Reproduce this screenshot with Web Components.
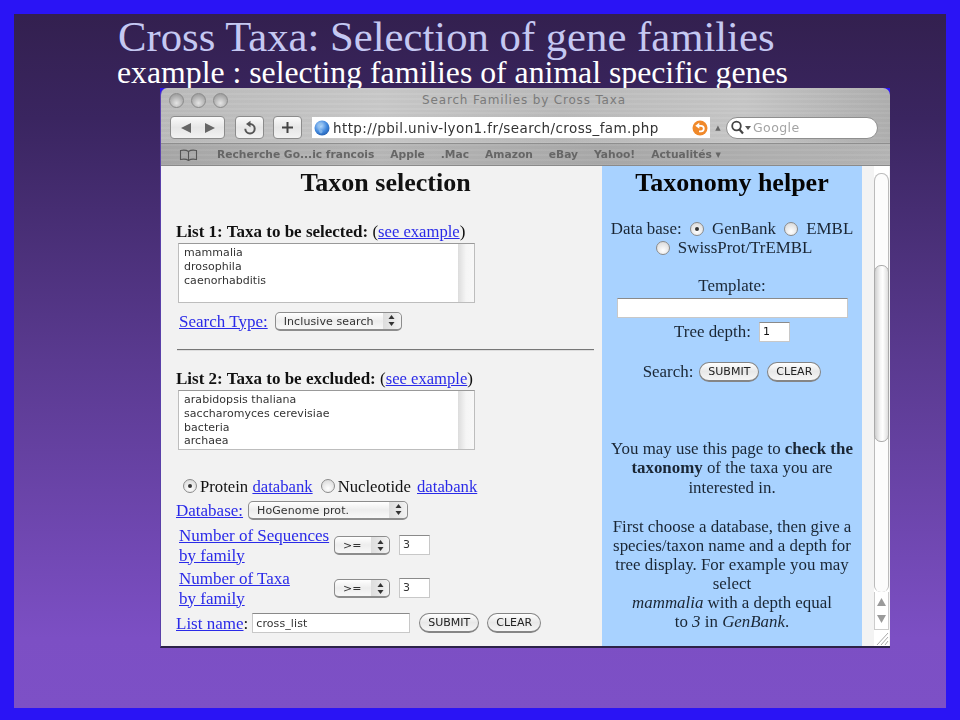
<!DOCTYPE html>
<html>
<head>
<meta charset="utf-8">
<title>Cross Taxa</title>
<style>
  html, body { margin: 0; padding: 0; background: #2a14f5; }
</style>
</head>
<body>
<slide-page>
  <span slot="title">Cross Taxa: Selection of gene families</span>
  <span slot="subtitle">example : selecting families of animal specific genes</span>
  <browser-window page-title="Search Families by Cross Taxa">
    <taxon-form slot="left"></taxon-form>
    <taxonomy-helper slot="right"></taxonomy-helper>
  </browser-window>
</slide-page>

<script>
class SlidePage extends HTMLElement {
  constructor() {
    super();
    this.attachShadow({ mode: 'open' }).innerHTML = `
      <style>
        :host {
          display: block;
          box-sizing: border-box;
          width: 960px;
          height: 720px;
          padding: 14px 14px 12px 14px;
          background: #2a14f5;
          font-family: "Liberation Serif", serif;
        }
        .inner {
          height: 100%;
          box-sizing: border-box;
          padding: 2px 0 0 104px;
          background: linear-gradient(180deg, #33204f 0%, #3a2560 15%, #5a3a90 50%, #7c4fc4 90%, #7d50c6 100%);
        }
        .title { color: #c5c8f2; font-size: 42.7px; line-height: 42px; white-space: nowrap; }
        .subtitle { color: #fff; font-size: 31.75px; line-height: 30px; white-space: nowrap; margin-left: -1px; }
        .stage { margin: 0 0 0 42px; }
      </style>
      <div class="inner">
        <div class="title"><slot name="title"></slot></div>
        <div class="subtitle"><slot name="subtitle"></slot></div>
        <div class="stage"><slot></slot></div>
      </div>`;
  }
}

class BrowserWindow extends HTMLElement {
  constructor() {
    super();
    this.attachShadow({ mode: 'open' }).innerHTML = `
      <style>
        :host {
          display: block;
          width: 730px;
          height: 560px;
          background: linear-gradient(180deg, #2a14f5 0, #2a14f5 10px, transparent 10px);
          font-family: "DejaVu Sans", sans-serif;
        }
        .win {
          height: 100%;
          box-sizing: border-box;
          border-radius: 7px 7px 0 0;
          border-left: 1px solid #5a40a8;
          border-bottom: 2px solid #2b2248;
          overflow: hidden;
          display: flex;
          flex-direction: column;
          filter: blur(.35px);
        }
        .metal {
          background:
            repeating-linear-gradient(180deg, rgba(255,255,255,.025) 0 2px, rgba(0,0,0,.02) 2px 5px),
            linear-gradient(90deg, #bcbcbc, #cacaca 30%, #bcbcbc 55%, #c8c8c8 80%, #b0b0b0);
        }
        .titlebar {
          height: 24px;
          flex: none;
          position: relative;
          display: flex;
          align-items: center;
          justify-content: center;
          color: #7a7a7a;
          font-size: 12px;
          letter-spacing: .83px;
          padding-right: 3px;
        }
        .lights {
          position: absolute;
          left: 8px;
          top: 5px;
          display: flex;
          gap: 7px;
        }
        .lights i {
          width: 15px;
          height: 15px;
          box-sizing: border-box;
          border-radius: 50%;
          border: 1px solid #8a8a8a;
          background: radial-gradient(circle at 50% 70%, #e4e4e4, #a2a2a2 75%);
        }
        .toolbar {
          height: 32px;
          flex: none;
          display: flex;
          align-items: center;
          padding: 0 11px 0 9px;
          box-sizing: border-box;
          border-bottom: 1px solid #8e8e8e;
        }
        .tb {
          height: 23px;
          box-sizing: border-box;
          border: 1px solid #8c8c8c;
          border-radius: 4px;
          background: linear-gradient(180deg, #fafafa, #e6e6e6 50%, #f2f2f2);
          display: flex;
          align-items: center;
          justify-content: center;
        }
        .nav { width: 55px; margin-right: 10px; gap: 12px; }
        .reload { width: 29px; margin-right: 9px; }
        .plus { width: 29px; margin-right: 10px; }
        .url {
          width: 398px;
          height: 21px;
          flex: none;
          box-sizing: border-box;
          background: #fff;
          display: flex;
          align-items: center;
          gap: 3px;
          padding: 0 2px 0 2px;
          font-size: 13.5px;
          color: #333;
          letter-spacing: .4px;
          white-space: nowrap;
        }
        .url span { flex: 1; }
        .caret { width: 16px; text-align: center; font-size: 7px; color: #666; flex: none; }
        .search {
          width: 152px;
          height: 22px;
          box-sizing: border-box;
          background: #fff;
          border: 1px solid #8f8f8f;
          border-radius: 11px;
          display: flex;
          align-items: center;
          padding-left: 3px;
          gap: 1px;
          color: #a4a4a4;
          font-size: 12.5px;
          letter-spacing: .4px;
        }
        .bookmarks {
          height: 22px;
          flex: none;
          box-sizing: border-box;
          display: flex;
          align-items: center;
          padding-left: 18px;
          font-size: 10.7px;
          font-weight: bold;
          color: #666;
          white-space: nowrap;
          border-bottom: 1px solid #8a8a8a;
          background:
            repeating-linear-gradient(180deg, rgba(255,255,255,.03) 0 2px, rgba(0,0,0,.02) 2px 5px),
            linear-gradient(90deg, #a8a8a8, #b8b8b8 30%, #aaaaaa 60%, #b6b6b6);
        }
        .bookmarks svg { margin-right: 19px; }
        .bookmarks span { margin-right: 16px; }
        .content { flex: 1; min-height: 0; display: flex; }
        .left { width: 441px; flex: none; background: #f2f2f2; }
        .right { width: 260px; flex: none; background: #a8d2ff; }
        .gutter { flex: 1; background: #f3f3f3; display: flex; justify-content: flex-end; }
        ::slotted(*) { height: 100%; }
      </style>
      <div class="win">
        <div class="metal titlebar">
          <div class="lights"><i></i><i></i><i></i></div>
          <span id="ttl"></span>
        </div>
        <div class="metal toolbar">
          <div class="tb nav">
            <svg width="12" height="12" viewBox="0 0 12 12"><path d="M11 1 1 6l10 5z" fill="#666"/></svg>
            <svg width="12" height="12" viewBox="0 0 12 12"><path d="M1 1l10 5-10 5z" fill="#666"/></svg>
          </div>
          <div class="tb reload">
            <svg width="14" height="15" viewBox="0 0 14 15"><path d="M7 4a4.700 4.700 0 1 1-4.700 4.700" fill="none" stroke="#555" stroke-width="2"/><path d="M7.500 .8V7.200L3 4z" fill="#555"/></svg>
          </div>
          <div class="tb plus">
            <svg width="13" height="13" viewBox="0 0 13 13"><path d="M6.500 1v11M1 6.500h11" stroke="#444" stroke-width="2" fill="none"/></svg>
          </div>
          <div class="url">
            <svg width="16" height="16" viewBox="0 0 16 16" style="flex:none">
              <defs><radialGradient id="g" cx=".4" cy=".35" r=".8"><stop offset="0" stop-color="#bfe0ff"/><stop offset=".55" stop-color="#3f86dc"/><stop offset="1" stop-color="#1a4f9c"/></radialGradient></defs>
              <circle cx="8" cy="8" r="7.500" fill="url(#g)"/>
              <path d="M5 3.500c2-1 4 0 3 1.500S5.500 6 5.500 8 8 9 8.500 11 7 14 6 13 3.500 6 5 3.500z" fill="#8fbdea" opacity=".7"/>
            </svg>
            <span>http://pbil.univ-lyon1.fr/search/cross_fam.php</span>
            <svg width="16" height="16" viewBox="0 0 16 16" style="flex:none">
              <circle cx="8" cy="8" r="7.500" fill="#f0892a"/>
              <path d="M5.500 5.800H9a2.800 2.800 0 0 1 0 5.600H7" fill="none" stroke="#fff" stroke-width="1.800"/>
              <path d="M7.300 2.800v6L3.300 5.800z" fill="#fff"/>
            </svg>
          </div>
          <div class="caret">&#9650;</div>
          <div class="search">
            <svg width="22" height="15" viewBox="0 0 22 15" style="flex:none"><circle cx="6.500" cy="6" r="4.300" fill="none" stroke="#444" stroke-width="1.800"/><path d="M9.500 9.500 13 13.500" stroke="#444" stroke-width="2.200"/><path d="M15 6h6l-3 4z" fill="#555"/></svg>
            <span>Google</span>
          </div>
        </div>
        <div class="bookmarks">
          <svg width="19" height="12" viewBox="0 0 19 12"><path d="M9.500 2.500C7.500 1 4 1 1.500 1.500v9c2.500-.5 6-.5 8 1 2-1.500 5.500-1.500 8-1v-9C15 1 11.500 1 9.500 2.500zm0 0v9" fill="none" stroke="#555" stroke-width="1.100"/></svg>
          <span>Recherche Go...ic francois</span>
          <span>Apple</span>
          <span>.Mac</span>
          <span>Amazon</span>
          <span>eBay</span>
          <span>Yahoo!</span>
          <span>Actualités &#9662;</span>
        </div>
        <div class="content">
          <div class="left"><slot name="left"></slot></div>
          <div class="right"><slot name="right"></slot></div>
          <div class="gutter"><scroll-track></scroll-track></div>
        </div>
      </div>`;
  }

  connectedCallback() {
    this.shadowRoot.getElementById('ttl').textContent = this.getAttribute('page-title');
  }
}

class ScrollTrack extends HTMLElement {
  constructor() {
    super();
    this.attachShadow({ mode: 'open' }).innerHTML = `
      <style>
        :host {
          display: flex;
          flex-direction: column;
          box-sizing: border-box;
          width: 15px;
          height: 100%;
          margin-right: 1px;
          padding-top: 7px;
          background: #fff;
        }
        .trough {
          flex: 1;
          box-sizing: border-box;
          border: 1px solid #bbb;
          border-bottom: 0;
          border-radius: 7px 7px 7px 7px / 8px 8px 6px 6px;
          background: #fcfcfc;
          padding-top: 91px;
          display: flex;
          flex-direction: column;
        }
        .thumb {
          height: 177px;
          margin: 0 0 0 -1px;
          width: 15px;
          box-sizing: border-box;
          border: 1px solid #aaa;
          border-radius: 7px;
          background: linear-gradient(90deg, #cfcfcf, #f6f6f6 40%, #fff 60%, #dedede);
        }
        .arrows {
          height: 37px;
          flex: none;
          border: 1px solid #ccc;
          border-top: 0;
          display: flex;
          flex-direction: column;
          align-items: center;
          justify-content: center;
          gap: 9px;
        }
        .grip { height: 16px; flex: none; }
      </style>
      <div class="trough"><div class="thumb"></div></div>
      <div class="arrows">
        <svg width="9" height="8" viewBox="0 0 9 8"><path d="M4.500 0 9 8H0z" fill="#9a9a9a"/></svg>
        <svg width="9" height="8" viewBox="0 0 9 8"><path d="M4.500 8 9 0H0z" fill="#9a9a9a"/></svg>
      </div>
      <div class="grip">
        <svg width="15" height="16" viewBox="0 0 15 16"><path d="M14 3 3 15M14 7 7 15M14 11l-3 4" stroke="#aaa" fill="none"/></svg>
      </div>`;
  }
}

class AquaSelect extends HTMLElement {
  constructor() {
    super();
    this.attachShadow({ mode: 'open' }).innerHTML = `
      <style>
        :host {
          display: inline-flex;
          box-sizing: border-box;
          height: 19px;
          border: 1px solid #8d8d8d;
          border-bottom-width: 2px;
          border-radius: 5px;
          background: linear-gradient(180deg, #fff, #ededed 50%, #f8f8f8);
          font: 11px "DejaVu Sans", sans-serif;
          letter-spacing: .1px;
          color: #333;
          align-items: center;
          vertical-align: middle;
          white-space: nowrap;
        }
        .label { flex: 1; padding: 1px 0 0 8px; }
        .arrows {
          width: 18px;
          align-self: stretch;
          display: flex;
          align-items: center;
          justify-content: center;
          background: linear-gradient(90deg, #ddd, #f2f2f2);
          border-radius: 0 5px 5px 0;
        }
      </style>
      <span class="label"><slot></slot></span>
      <span class="arrows"><svg width="7" height="11" viewBox="0 0 7 11"><path d="M3.500 0 6.500 4H.5zM3.500 11 .5 7h6z" fill="#333"/></svg></span>`;
  }
}

class AquaButton extends HTMLElement {
  constructor() {
    super();
    this.attachShadow({ mode: 'open' }).innerHTML = `
      <style>
        :host {
          display: inline-flex;
          box-sizing: border-box;
          height: 20px;
          padding: 0 8px;
          border: 1px solid #858585;
          border-bottom-width: 2px;
          border-radius: 10px;
          background: linear-gradient(180deg, #fff, #e8e8e8 50%, #f6f6f6);
          font: 11px "DejaVu Sans", sans-serif;
          color: #222;
          align-items: center;
          justify-content: center;
          vertical-align: middle;
        }
      </style>
      <slot></slot>`;
  }
}

class AquaRadio extends HTMLElement {
  constructor() {
    super();
    this.attachShadow({ mode: 'open' }).innerHTML = `
      <style>
        :host {
          display: inline-block;
          box-sizing: border-box;
          width: 14px;
          height: 14px;
          border: 1px solid #8a8a8a;
          border-radius: 50%;
          background: radial-gradient(circle at 50% 70%, #fff, #dcdcdc 80%);
          vertical-align: -2px;
          position: relative;
        }
        :host([checked])::after {
          content: "";
          position: absolute;
          left: 4px;
          top: 4px;
          width: 4px;
          height: 4px;
          border-radius: 50%;
          background: #333;
        }
      </style>`;
  }
}

class TextList extends HTMLElement {
  constructor() {
    super();
    this.attachShadow({ mode: 'open' }).innerHTML = `
      <style>
        :host {
          display: flex;
          box-sizing: border-box;
          height: 60px;
          width: 297px;
          background: #fff;
          border: 1px solid #bdbdbd;
          border-top-color: #999;
          font: 11px/13.8px "DejaVu Sans", sans-serif;
          letter-spacing: .05px;
          color: #333;
        }
        .text { flex: 1; padding: 2px 5px; white-space: pre-line; }
        .bar { width: 16px; flex: none; background: linear-gradient(90deg, #dcdcdc, #f5f5f5 50%, #f8f8f8); }
      </style>
      <div class="text"><slot></slot></div>
      <div class="bar"></div>`;
  }
}

class TextBox extends HTMLElement {
  constructor() {
    super();
    this.attachShadow({ mode: 'open' }).innerHTML = `
      <style>
        :host {
          display: inline-flex;
          box-sizing: border-box;
          height: 20px;
          background: #fff;
          border: 1px solid #c8c8c8;
          border-top-color: #8a8a8a;
          font: 11px "DejaVu Sans", sans-serif;
          letter-spacing: .1px;
          color: #333;
          align-items: center;
          padding-left: 3px;
          vertical-align: middle;
        }
      </style>
      <slot></slot>`;
  }
}

class TaxonForm extends HTMLElement {
  constructor() {
    super();
    this.attachShadow({ mode: 'open' }).innerHTML = `
      <style>
        :host {
          display: block;
          box-sizing: border-box;
          font: 17px/19px "Liberation Serif", serif;
          color: #111;
          padding: 3px 8px 0 15px;
          filter: blur(.3px);
        }
        a { color: #2a2ae8; text-decoration: underline; }
        h1 { font-size: 26px; line-height: 28px; margin: 0 0 25px; text-align: center; padding-left: 1px; }
        .head { margin: 0; }
        .head a { font-size: 16.6px; }
        text-list { margin: 2px 0 0 2px; }
        .type { margin: 8px 0 0 3px; display: flex; align-items: center; gap: 7px; height: 20px; }
        hr { margin: 18px 0 18px 1px; border: 0; border-top: 1px solid #777; border-bottom: 1px solid #ddd; }
        .dbs { margin: 26px 0 0 7px; height: 20px; display: flex; align-items: center; white-space: pre; font-size: 16.7px; }
        .dbs aqua-radio { margin-right: 3px; }
        .dbs .gap { width: 8px; }
        .dbs .last { margin-left: 2px; }
        .row { display: flex; align-items: center; }
        .stack { margin: 2px 0 0 3px; width: 155px; flex: none; line-height: 19.5px; }
        .row text-box { width: 31px; margin-left: 9px; }
        .row aqua-select.op { margin-top: 2px; }
        .db { margin-top: 4px; height: 20px; gap: 5px; }
        .num { height: 39px; margin-top: 4px; }
        .db + .num { margin-top: 5px; }
        .name { margin-top: 6px; height: 20px; }
        .name text-box { width: 158px; margin-left: 4px; }
        .name aqua-button { margin-left: 9px; }
        .name aqua-button + aqua-button { margin-left: 8px; }
      </style>
      <h1>Taxon selection</h1>
      <p class="head"><b>List 1: Taxa to be selected:</b> (<a href="#">see example</a>)</p>
      <text-list>mammalia
drosophila
caenorhabditis</text-list>
      <div class="type"><a href="#">Search Type:</a><aqua-select style="width:127px">Inclusive search</aqua-select></div>
      <hr>
      <p class="head"><b>List 2: Taxa to be excluded:</b> (<a href="#">see example</a>)</p>
      <text-list>arabidopsis thaliana
saccharomyces cerevisiae
bacteria
archaea</text-list>
      <div class="dbs"><aqua-radio checked></aqua-radio>Protein <a href="#">databank</a><span class="gap"></span><aqua-radio></aqua-radio>Nucleotide <a class="last" href="#">databank</a></div>
      <div class="row db"><a href="#">Database:</a><aqua-select style="width:160px">HoGenome prot.</aqua-select></div>
      <div class="row num">
        <div class="stack"><a href="#">Number of Sequences<br>by family</a></div>
        <aqua-select class="op" style="width:56px">&gt;=</aqua-select><text-box>3</text-box>
      </div>
      <div class="row num">
        <div class="stack"><a href="#">Number of Taxa<br>by family</a></div>
        <aqua-select class="op" style="width:56px">&gt;=</aqua-select><text-box>3</text-box>
      </div>
      <div class="row name">
        <span><a href="#">List name</a>:</span>
        <text-box>cross_list</text-box>
        <aqua-button style="width:60px">SUBMIT</aqua-button>
        <aqua-button style="width:54px">CLEAR</aqua-button>
      </div>`;
  }
}

class TaxonomyHelper extends HTMLElement {
  constructor() {
    super();
    this.attachShadow({ mode: 'open' }).innerHTML = `
      <style>
        :host {
          display: block;
          box-sizing: border-box;
          font: 16.9px/19.2px "Liberation Serif", serif;
          color: #1a2634;
          text-align: center;
          padding: 3px 4px 0 4px;
          filter: blur(.3px);
        }
        h1 { font-size: 26px; line-height: 28px; margin: 0 0 22px; color: #050505; }
        p { margin: 0; }
        aqua-radio { margin: 0 4px; }
        .tpl { margin-top: 19px; }
        .tpl text-box { display: flex; width: 231px; margin: 2px auto 0; }
        .depth { margin-top: 4px; height: 20px; display: flex; align-items: center; justify-content: center; }
        .depth text-box { width: 31px; margin-left: 8px; color: #111; }
        .search { margin-top: 20px; height: 20px; display: flex; justify-content: center; align-items: center; gap: 8px; }
        .search span { margin-right: -2px; }
        .about { margin-top: 57px; line-height: 19.5px; }
        .how { margin-top: 20px; line-height: 19px; }
      </style>
      <h1>Taxonomy helper</h1>
      <p>Data base: <aqua-radio checked></aqua-radio> GenBank <aqua-radio></aqua-radio> EMBL<br><aqua-radio></aqua-radio> SwissProt/TrEMBL</p>
      <div class="tpl">Template:<text-box></text-box></div>
      <div class="depth">Tree depth:<text-box>1</text-box></div>
      <div class="search"><span>Search:</span><aqua-button style="width:60px">SUBMIT</aqua-button><aqua-button style="width:54px">CLEAR</aqua-button></div>
      <p class="about">You may use this page to <b>check the taxonomy</b> of the taxa you are interested in.</p>
      <p class="how">First choose a database, then give a species/taxon name and a depth for tree display. For example you may select<br><i>mammalia</i> with a depth equal<br>to <i>3</i> in <i>GenBank</i>.</p>`;
  }
}

customElements.define('slide-page', SlidePage);
customElements.define('browser-window', BrowserWindow);
customElements.define('scroll-track', ScrollTrack);
customElements.define('aqua-select', AquaSelect);
customElements.define('aqua-button', AquaButton);
customElements.define('aqua-radio', AquaRadio);
customElements.define('text-list', TextList);
customElements.define('text-box', TextBox);
customElements.define('taxon-form', TaxonForm);
customElements.define('taxonomy-helper', TaxonomyHelper);
</script>
</body>
</html>
